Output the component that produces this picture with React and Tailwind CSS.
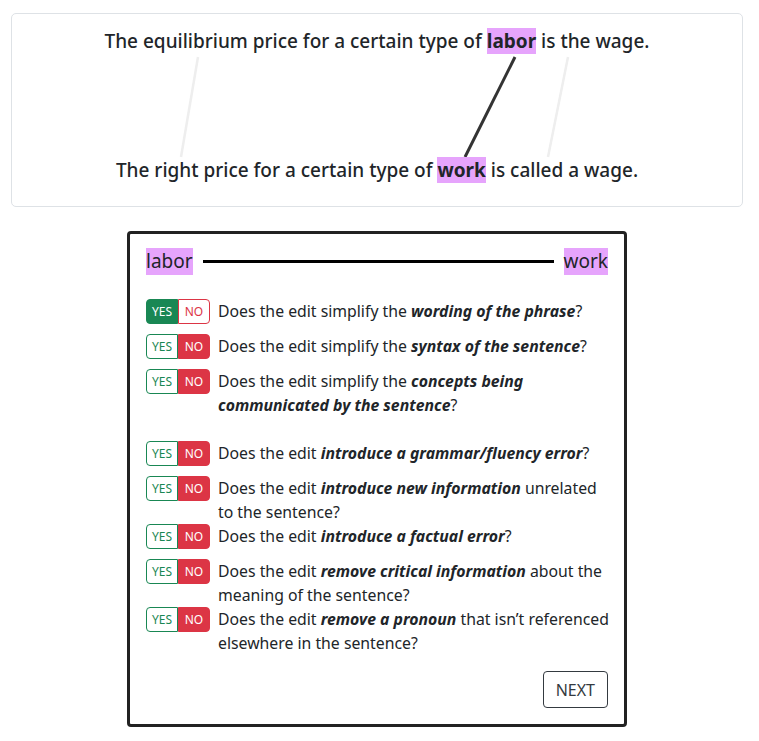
import React, { useState } from 'react';

const QUESTIONS = [
  { pre: 'Does the edit simplify the ', em: 'wording of the phrase', post: '?' },
  { pre: 'Does the edit simplify the ', em: 'syntax of the sentence', post: '?' },
  { pre: 'Does the edit simplify the ', em: 'concepts being communicated by the sentence', post: '?', spacer: true },
  { pre: 'Does the edit ', em: 'introduce a grammar/fluency error', post: '?' },
  { pre: 'Does the edit ', em: 'introduce new information', post: ' unrelated to the sentence?' },
  { pre: 'Does the edit ', em: 'introduce a factual error', post: '?' },
  { pre: 'Does the edit ', em: 'remove critical information', post: ' about the meaning of the sentence?' },
  { pre: 'Does the edit ', em: 'remove a pronoun', post: ' that isn’t referenced elsewhere in the sentence?' },
];

const YesNo = ({ value, onChange }) => (
  <div className="flex h-[25px] w-[64px] shrink-0 text-[12px] leading-none">
    <button
      type="button"
      onClick={() => onChange(true)}
      className={
        value
          ? 'flex-1 rounded-l-[4px] border border-[#198754] bg-[#198754] text-white'
          : 'flex-1 rounded-l-[4px] border border-[#198754] bg-white text-[#198754]'
      }
    >
      YES
    </button>
    <button
      type="button"
      onClick={() => onChange(false)}
      className={
        value
          ? 'flex-1 rounded-r-[4px] border border-[#dc3545] bg-white text-[#dc3545]'
          : 'flex-1 rounded-r-[4px] border border-[#dc3545] bg-[#dc3545] text-white'
      }
    >
      NO
    </button>
  </div>
);

export default function App() {
  const [answers, setAnswers] = useState([true, false, false, false, false, false, false, false]);

  const setAnswer = (i, v) => {
    const next = [...answers];
    next[i] = v;
    setAnswers(next);
  };

  return (
    <div
      className="w-[754px] bg-white pt-[13px] pb-4 text-[#212529]"
      style={{ fontFamily: '"Noto Sans", sans-serif' }}
    >
      {/* sentence pair */}
      <div className="relative mx-[11px] h-[194px] rounded-[5px] border border-[#dee2e6]">
        <svg className="absolute inset-0" width="732" height="194">
          <line x1="186" y1="43" x2="169" y2="143" stroke="#eeeeee" strokeWidth="2.5" />
          <line x1="556" y1="43" x2="536" y2="143" stroke="#eeeeee" strokeWidth="2.5" />
          <line x1="503" y1="43" x2="453" y2="143" stroke="#333333" strokeWidth="3" />
        </svg>
        <div className="relative flex h-full flex-col items-center justify-between pt-[14px] pb-[22px] text-[19px] font-medium leading-[27px]">
          <p>
            The equilibrium price for a certain type of{' '}
            <span className="bg-[#e6a4fc] font-bold">labor</span> is the wage.
          </p>
          <p>
            The right price for a certain type of{' '}
            <span className="bg-[#e6a4fc] font-bold">work</span> is called a wage.
          </p>
        </div>
      </div>

      {/* question card */}
      <div className="mx-auto mt-6 w-[500px] rounded-[4px] border-[3px] border-[#222222] px-4 pt-[14px] pb-4">
        <div className="flex items-center gap-[10px] text-[19px] leading-[27px]">
          <span className="bg-[#e6a4fc]">labor</span>
          <div className="h-[3px] flex-1 bg-black" />
          <span className="bg-[#e6a4fc]">work</span>
        </div>

        <div className="mt-6">
          {QUESTIONS.map((q, i) => (
            <div key={i} className={q.spacer ? 'mb-6' : ''}>
              <div className="flex min-h-[35px] items-start gap-2">
                <YesNo value={answers[i]} onChange={(v) => setAnswer(i, v)} />
                <p className="-mr-[6px] text-[15.8px] leading-[24px]">
                  {q.pre}
                  <b className="italic">{q.em}</b>
                  {q.post}
                </p>
              </div>
            </div>
          ))}
        </div>

        <div className="mt-4 flex justify-end">
          <button
            type="button"
            className="h-[37px] rounded-[4px] border border-[#343a40] px-[12px] text-[16px] text-[#343a40]"
          >
            NEXT
          </button>
        </div>
      </div>
    </div>
  );
}
